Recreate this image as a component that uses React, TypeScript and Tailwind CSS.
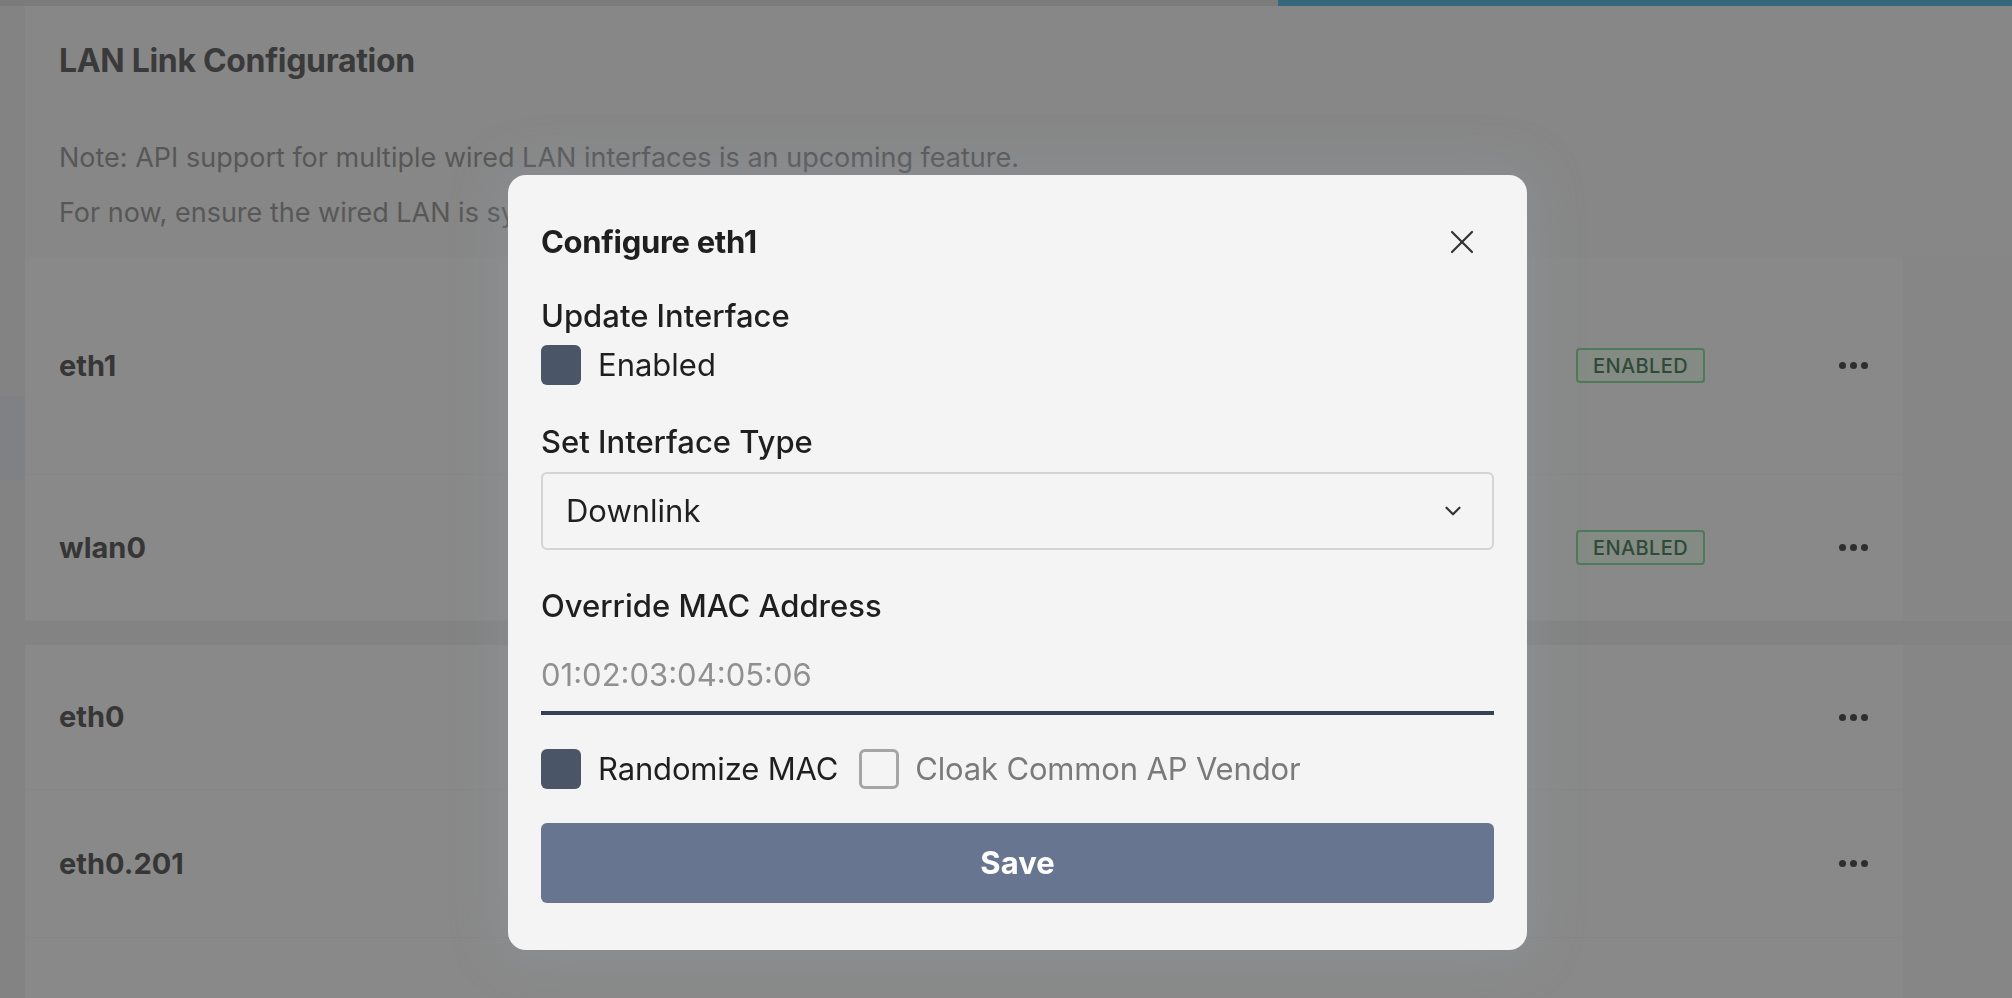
import { X, ChevronDown } from 'lucide-react';

type Row = { name: string; enabled: boolean; height: string };

const firstGroup: Row[] = [
  { name: 'eth1', enabled: true, height: 'h-[218px]' },
  { name: 'wlan0', enabled: true, height: 'h-[146px]' },
];

const secondGroup: Row[] = [
  { name: 'eth0', enabled: false, height: 'h-[145px]' },
  { name: 'eth0.201', enabled: false, height: 'h-[148px]' },
  { name: '', enabled: false, height: 'h-[146px]' },
];

function Dots() {
  return (
    <div className="flex items-center gap-[4px]">
      <span className="w-[7px] h-[7px] rounded-full bg-[#2e2e2e]" />
      <span className="w-[7px] h-[7px] rounded-full bg-[#2e2e2e]" />
      <span className="w-[7px] h-[7px] rounded-full bg-[#2e2e2e]" />
    </div>
  );
}

function LinkRow({ row }: { row: Row }) {
  return (
    <div className={`flex items-center border-b border-[#868686] pl-[34px] pr-[35px] ${row.height}`}>
      <div className="flex-1 text-[29px] font-bold text-[#363636]">{row.name}</div>
      <div className="w-[129px]">
        {row.enabled && (
          <div className="flex h-[35px] items-center justify-center rounded-[4px] border-2 border-[#4f7a59] bg-[#848b85] text-[20px] font-medium tracking-[0.02em] text-[#2f4a37]">
            ENABLED
          </div>
        )}
      </div>
      <div className="ml-[134px] w-[29px]">{row.name && <Dots />}</div>
    </div>
  );
}

function Checkbox({ checked }: { checked: boolean }) {
  return checked ? (
    <div className="w-[40px] h-[40px] shrink-0 rounded-[6px] bg-[#4a5568]" />
  ) : (
    <div className="w-[40px] h-[40px] shrink-0 rounded-[6px] border-[3px] border-[#a5a5a5]" />
  );
}

function ConfigureModal() {
  return (
    <div className="fixed inset-0 flex items-start justify-center pt-[175px] pl-[23px]">
      <div className="w-[1019px] rounded-[18px] bg-[#f4f4f4] px-[33px] pt-[48px] pb-[47px] text-[#1f1f1f] shadow-[0_0_50px_8px_rgba(150,158,172,0.3)]">
        <div className="flex h-[38px] items-center justify-between">
          <h2 className="text-[31px] font-bold leading-[38px] tracking-[-0.01em]">Configure eth1</h2>
          <button className="mr-[12px] text-[#333]">
            <X size={40} strokeWidth={1.3} />
          </button>
        </div>

        <div className="mt-[36px] text-[31px] font-medium leading-[38px]">Update Interface</div>
        <label className="mt-[10px] flex h-[40px] items-center gap-[17px] text-[31px]">
          <Checkbox checked />
          Enabled
        </label>

        <div className="mt-[38px] text-[31px] font-medium leading-[38px]">Set Interface Type</div>
        <div className="mt-[11px] flex h-[78px] items-center justify-between rounded-[6px] border-2 border-[#d4d4d4] pl-[23px] pr-[26px] text-[31px]">
          <span>Downlink</span>
          <ChevronDown size={26} strokeWidth={2} className="text-[#333]" />
        </div>

        <div className="mt-[37px] text-[31px] font-medium leading-[38px]">Override MAC Address</div>
        <input
          className="mt-[12px] h-[78px] w-full border-b-4 border-[#364153] bg-transparent text-[31px] outline-none placeholder:text-[#909090]"
          placeholder="01:02:03:04:05:06"
        />

        <div className="mt-[34px] flex h-[40px] items-center text-[31px]">
          <Checkbox checked />
          <span className="ml-[17px] tracking-[-0.005em]">Randomize MAC</span>
          <div className="ml-[21px]">
            <Checkbox checked={false} />
          </div>
          <span className="ml-[16px] tracking-[-0.005em] text-[#7a7a7a]">Cloak Common AP Vendor</span>
        </div>

        <button className="mt-[34px] h-[80px] w-full rounded-[6px] bg-[#687590] text-[31px] font-bold text-white">
          Save
        </button>
      </div>
    </div>
  );
}

export default function App() {
  return (
    <div className="relative h-[998px] w-full overflow-hidden bg-[#868686] font-['Inter',sans-serif]">
      <div className="flex h-[6px]">
        <div className="flex-1 bg-[#7b7b7b]" />
        <div className="w-[734px] bg-[#34687a]" />
      </div>

      <div className="flex">
        <div className="w-[25px] shrink-0 bg-[#838383] pt-[390px]">
          <div className="h-[84px] bg-[#7f8185]" />
        </div>

        <div className="flex-1">
          <div className="h-[251px] bg-[#878787] pl-[34px] pt-[37px]">
            <h1 className="text-[32px] font-bold leading-[36px] tracking-[-0.01em] text-[#3a3a3a]">
              LAN Link Configuration
            </h1>
            <p className="mt-[61px] text-[27px] leading-[36px] text-[#575757]">
              Note: API support for multiple wired LAN interfaces is an upcoming feature.
            </p>
            <p className="mt-[19px] text-[27px] leading-[36px] text-[#575757]">
              For now, ensure the wired LAN is synced with the interface list.
            </p>
          </div>

          <div className="w-[1878px] bg-[#898989]">
            {firstGroup.map((r) => (
              <LinkRow key={r.name} row={r} />
            ))}
          </div>
          <div className="h-[24px] bg-[#838383]" />
          <div className="w-[1878px] bg-[#898989]">
            {secondGroup.map((r, i) => (
              <LinkRow key={i} row={r} />
            ))}
          </div>
        </div>
      </div>

      <ConfigureModal />
    </div>
  );
}
